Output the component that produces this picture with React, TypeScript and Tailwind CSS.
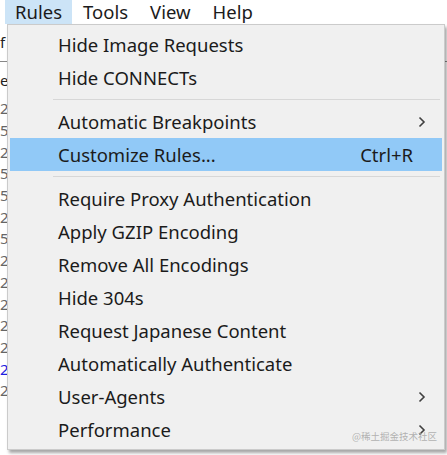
import { Fragment } from 'react';

type Item = { label: string; shortcut?: string; sub?: boolean; active?: boolean } | 'sep';

const items: Item[] = [
  { label: 'Hide Image Requests' },
  { label: 'Hide CONNECTs' },
  'sep',
  { label: 'Automatic Breakpoints', sub: true },
  { label: 'Customize Rules...', shortcut: 'Ctrl+R', active: true },
  'sep',
  { label: 'Require Proxy Authentication' },
  { label: 'Apply GZIP Encoding' },
  { label: 'Remove All Encodings' },
  { label: 'Hide 304s' },
  { label: 'Request Japanese Content' },
  { label: 'Automatically Authenticate' },
  { label: 'User-Agents', sub: true },
  { label: 'Performance', sub: true },
];

const bgRows = ['2', '5', '2', '5', '5', '2', '5', '2', '2', '2', '2', '2', '2', '2'];

function Chevron() {
  return (
    <svg width="8" height="12" viewBox="0 0 8 12" className="text-[#404040]">
      <path d="M1.5 1.5 L6 6 L1.5 10.5" fill="none" stroke="currentColor" strokeWidth="1.6" />
    </svg>
  );
}

export default function App() {
  return (
    <div
      className="relative w-[447px] h-[455px] overflow-hidden bg-white text-[#1b1b1b]"
      style={{ fontFamily: '"Noto Sans", "Noto Sans CJK SC", sans-serif' }}
    >
      {/* menu bar */}
      <div className="flex h-[24px] items-center text-[18.5px] leading-none">
        <div className="ml-[5px] h-full px-[10px] flex items-center bg-[#cce4f7]">Rules</div>
        <div className="h-full px-[11px] flex items-center">Tools</div>
        <div className="h-full px-[11px] flex items-center">View</div>
        <div className="h-full px-[11px] flex items-center">Help</div>
      </div>

      {/* window behind the menu */}
      <div className="flex flex-col text-[15px] text-[#666] leading-none">
        <div className="h-[38px] flex items-center border-b border-[#888] text-[#222]">f</div>
        <div className="h-[36px] flex items-center text-[#222]">e</div>
        {bgRows.map((c, i) => (
          <div key={i} className={`h-[21.7px] flex items-center ${i === 12 ? 'text-[#2020e0]' : ''}`}>
            {c}
          </div>
        ))}
      </div>

      {/* dropdown */}
      <div className="absolute left-[7px] top-[24px] w-[438px] h-[426px] bg-[#f0f0f0] border border-[#cbcbcb] shadow-[2px_3px_3px_rgba(0,0,0,0.35)] pt-[3px] px-[2px]">
        {items.map((it, i) => (
          <Fragment key={i}>
            {it === 'sep' ? (
              <div className="h-[11px] flex items-center pl-[43px] pr-[2px]">
                <div className="h-px w-full bg-[#d7d7d7]" />
              </div>
            ) : (
              <div
                className={`h-[33px] flex items-center pl-[48px] pr-[16px] text-[18.5px] ${
                  it.active ? 'bg-[#91c9f7]' : ''
                }`}
              >
                <span className="flex-1">{it.label}</span>
                {it.shortcut && <span className="mr-[13px]">{it.shortcut}</span>}
                {it.sub && <Chevron />}
              </div>
            )}
          </Fragment>
        ))}
      </div>

      {/* watermark */}
      <div
        className="absolute left-[352px] top-[432px] whitespace-nowrap text-[9.5px] leading-none text-[#a0a0a0]/80"
        style={{ fontFamily: '"Noto Sans CJK SC", sans-serif' }}
      >
        @稀土掘金技术社区
      </div>
    </div>
  );
}
